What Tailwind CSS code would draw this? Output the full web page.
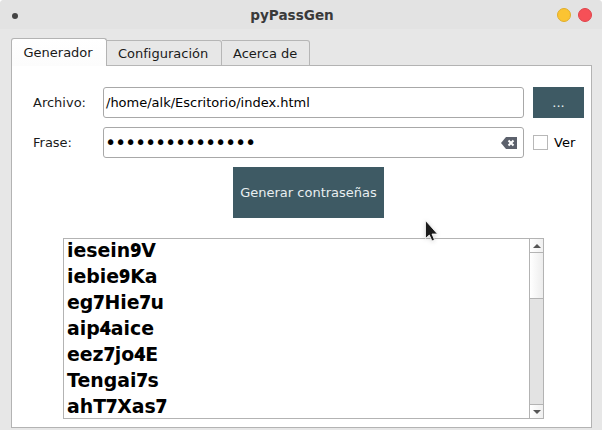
<!DOCTYPE html>
<html lang="es">
<head>
<meta charset="utf-8">
<title>pyPassGen</title>
<script src="https://cdn.jsdelivr.net/npm/@tailwindcss/browser@4"></script>
</head>
<body class="bg-white">
<div class="relative flex h-[430px] w-[602px] flex-col overflow-hidden rounded-t-[4px] bg-[#e7e7e7] font-['DejaVu_Sans',sans-serif] text-[13px] leading-4 text-[#1a1a1a]">
  <header class="grid h-[29px] shrink-0 grid-cols-[1fr_auto_1fr] items-center bg-[#e3e3e3] px-[10px]">
    <span class="ml-[2px] mt-[3px] size-[6px] rounded-full bg-[#444]"></span>
    <h1 class="relative -left-[9px] text-[13.6px] font-bold text-[#3a3a3a]">pyPassGen</h1>
    <div class="flex justify-end gap-[7px]">
      <span class="size-[14px] rounded-full border border-[#e0ae2b] bg-[#fbc432]"></span>
      <span class="size-[14px] rounded-full border border-[#e0434b] bg-[#f65057]"></span>
    </div>
  </header>
  <nav class="z-10 ml-[11px] mt-[9px] flex h-[28px] shrink-0 items-end">
    <div class="h-[28px] w-[96px] rounded-t-[3px] border border-b-0 border-[#b3b3b3] bg-gradient-to-b from-white to-[#fcfcfc] pl-[11.5px] pt-[6px]">Generador</div>
    <div class="h-[26px] w-[115px] rounded-tr-[3px] border border-l-0 border-[#b6b6b6] pl-[11px] pt-[5px]">Configuración</div>
    <div class="h-[26px] w-[88px] rounded-tr-[3px] border border-l-0 border-[#b6b6b6] pl-[11px] pt-[5px]">Acerca de</div>
  </nav>
  <main class="-mt-px ml-[11px] flex h-[363px] w-[581px] shrink-0 flex-col border border-[#b3b3b3] bg-white pl-[21px] pt-[21px]">
    <div class="flex h-[31px] items-center">
      <label class="w-[70px]">Archivo:</label>
      <div class="flex h-[31px] w-[421px] items-center rounded-[3px] border border-[#a8a8a8] pl-[2px] text-black">/home/alk/Escritorio/index.html</div>
      <div class="ml-[9px] flex h-[31px] w-[51px] items-center justify-center bg-[#3e5a64] text-[#e8eef0]">...</div>
    </div>
    <div class="mt-[9px] flex h-[31px] items-center">
      <label class="w-[70px]">Frase:</label>
      <div class="flex h-[31px] w-[421px] items-center justify-between rounded-[3px] border border-[#a8a8a8] pl-[1px] pr-[6px]">
        <span class="-mt-[2px] text-[19px] tracking-[-1.21px] text-black">•••••••••••••••</span>
        <svg class="h-3 w-4" viewBox="0 0 16 12"><path d="M5 0H16V12H5L0 6Z" fill="#5c616c"/><path d="M7.5 3.5L12.5 8.5M12.5 3.5L7.5 8.5" stroke="#fff" stroke-width="2"/></svg>
      </div>
      <span class="ml-[9px] size-[15px] border border-[#b8b8b8] bg-white"></span>
      <span class="ml-[6px] text-black">Ver</span>
    </div>
    <div class="ml-[200px] mt-[9px] flex h-[51px] w-[151px] shrink-0 items-center justify-center whitespace-nowrap bg-[#3e5a64] text-[#e8eef0]">Generar contraseñas</div>
    <div class="ml-[30px] mt-[20px] flex h-[181px] w-[481px] shrink-0 border border-[#b3b3b3]">
      <ul class="-mt-[2px] grow pl-[3px] font-['DejaVu_Sans',sans-serif] text-[18.9px] font-bold leading-[26px] text-black [&_b]:font-['Noto_Sans'] [&>li]:h-[26px]">
        <li>iesein<b>9</b>V</li><li>iebie<b>9</b>Ka</li><li>eg<b>7</b>Hie<b>7</b>u</li><li>aip<b>4</b>aice</li><li>eez<b>7</b>jo<b>4</b>E</li><li>Tengai<b>7</b>s</li><li>ahT<b>7</b>Xas<b>7</b></li>
      </ul>
      <div class="flex w-[14px] flex-col border-l border-[#b3b3b3] bg-[#e3e3e3]">
        <div class="flex h-[14px] items-center justify-center border-b border-[#b3b3b3] bg-gradient-to-r from-white to-[#f0f0f0]"><svg class="h-1 w-2" viewBox="0 0 8 4"><path d="M0 4L4 0L8 4Z" fill="#555"/></svg></div>
        <div class="h-[46px] border-b border-[#b3b3b3] bg-gradient-to-r from-white to-[#ededed]"></div>
        <div class="mt-auto flex h-[14px] items-center justify-center border-t border-[#b3b3b3] bg-gradient-to-r from-white to-[#f0f0f0]"><svg class="h-1 w-2" viewBox="0 0 8 4"><path d="M0 0L4 4L8 0Z" fill="#555"/></svg></div>
      </div>
    </div>
  </main>
  <svg class="absolute left-[424px] top-[219px] h-[23px] w-[15px] drop-shadow-sm" viewBox="0 0 15 23"><path d="M1.5 1.5V19.5L5.3 16L8 22L10.5 20.8L8 15H13.5Z" fill="#1a1a1a" stroke="#fff" stroke-width="0.8"/></svg>
</div>
</body>
</html>
